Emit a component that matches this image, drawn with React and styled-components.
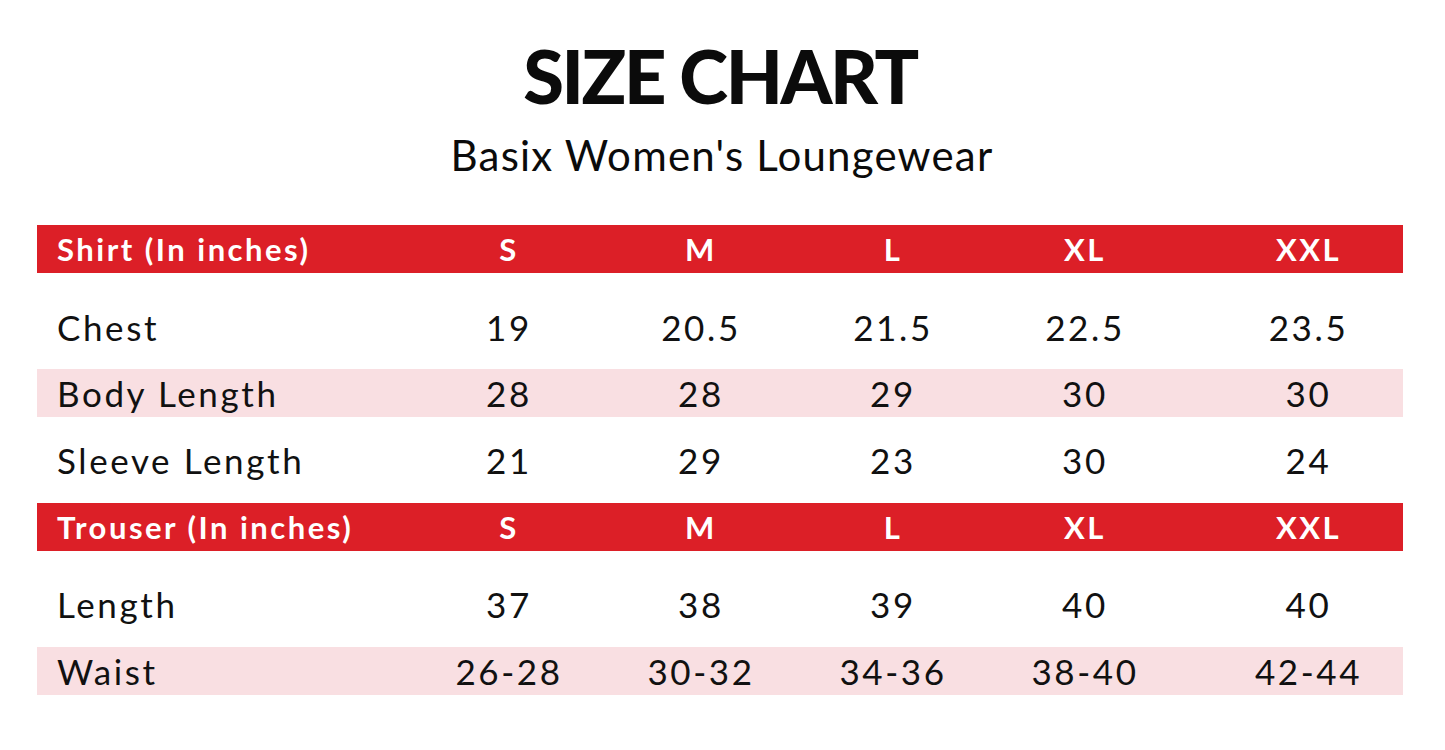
import styled, { createGlobalStyle } from 'styled-components'

const GlobalStyle = createGlobalStyle`
  html, body {
    margin: 0;
    padding: 0;
    background: #fff;
  }
  body {
    font-family: Lato, "Liberation Sans", sans-serif;
    color: #111;
  }
`

const RED = '#dc1f27'
const PINK = '#f9dfe2'

const shirtRows = [
  { label: 'Chest', values: ['19', '20.5', '21.5', '22.5', '23.5'], tall: 96, offset: 12 },
  { label: 'Body Length', values: ['28', '28', '29', '30', '30'], pink: true },
  { label: 'Sleeve Length', values: ['21', '29', '23', '30', '24'], tall: 86 },
]

const trouserRows = [
  { label: 'Length', values: ['37', '38', '39', '40', '40'], tall: 96, offset: 10 },
  { label: 'Waist', values: ['26-28', '30-32', '34-36', '38-40', '42-44'], pink: true },
]

const sizes = ['S', 'M', 'L', 'XL', 'XXL']

const Page = styled.div`
  width: 1445px;
  height: 750px;
  box-sizing: border-box;
  padding: 36px 42px 0 37px;
  display: flex;
  flex-direction: column;
  align-items: center;
`

const Title = styled.h1`
  margin: 0;
  font-size: 74px;
  font-weight: 900;
  line-height: 80px;
  letter-spacing: -2.4px;
  color: #0b0b0b;
`

const Subtitle = styled.h2`
  margin: 16px 0 0 4px;
  font-size: 42px;
  font-weight: 400;
  line-height: 46px;
  letter-spacing: 1.2px;
  color: #0b0b0b;
`

const Table = styled.div`
  margin-top: 47px;
  width: 1366px;
  display: flex;
  flex-direction: column;
`

const Row = styled.div`
  display: grid;
  grid-template-columns: 375px repeat(4, 192px) 1fr;
  height: ${({ $height }) => $height || 48}px;
  box-sizing: border-box;
  padding-top: ${({ $offset }) => $offset || 0}px;
  align-items: center;
  background: ${({ $bg }) => $bg || 'transparent'};
`

const HeadCell = styled.div`
  color: #fff;
  font-size: 31px;
  font-weight: 700;
  text-align: center;
  letter-spacing: 2.5px;
  padding-left: 2px;
  &:first-child { text-align: left; padding-left: 20px; }
  &:last-child { padding-left: 34px; }
`

const Cell = styled.div`
  font-size: 35px;
  font-weight: 400;
  text-align: center;
  letter-spacing: 2.6px;
  padding-left: 2px;
  color: #111;
  &:first-child { text-align: left; padding-left: 20px; }
  &:last-child { padding-left: 34px; }
`

const Section = ({ title, rows }) => (
  <>
    <Row $bg={RED}>
      <HeadCell>{title}</HeadCell>
      {sizes.map((s) => <HeadCell key={s}>{s}</HeadCell>)}
    </Row>
    {rows.map((r) => (
      <Row key={r.label} $height={r.tall} $offset={r.offset} $bg={r.pink ? PINK : null}>
        <Cell>{r.label}</Cell>
        {r.values.map((v, i) => <Cell key={i}>{v}</Cell>)}
      </Row>
    ))}
  </>
)

export default function App() {
  return (
    <Page>
      <GlobalStyle />
      <Title>SIZE CHART</Title>
      <Subtitle>Basix Women's Loungewear</Subtitle>
      <Table>
        <Section title="Shirt (In inches)" rows={shirtRows} />
        <Section title="Trouser (In inches)" rows={trouserRows} />
      </Table>
    </Page>
  )
}
